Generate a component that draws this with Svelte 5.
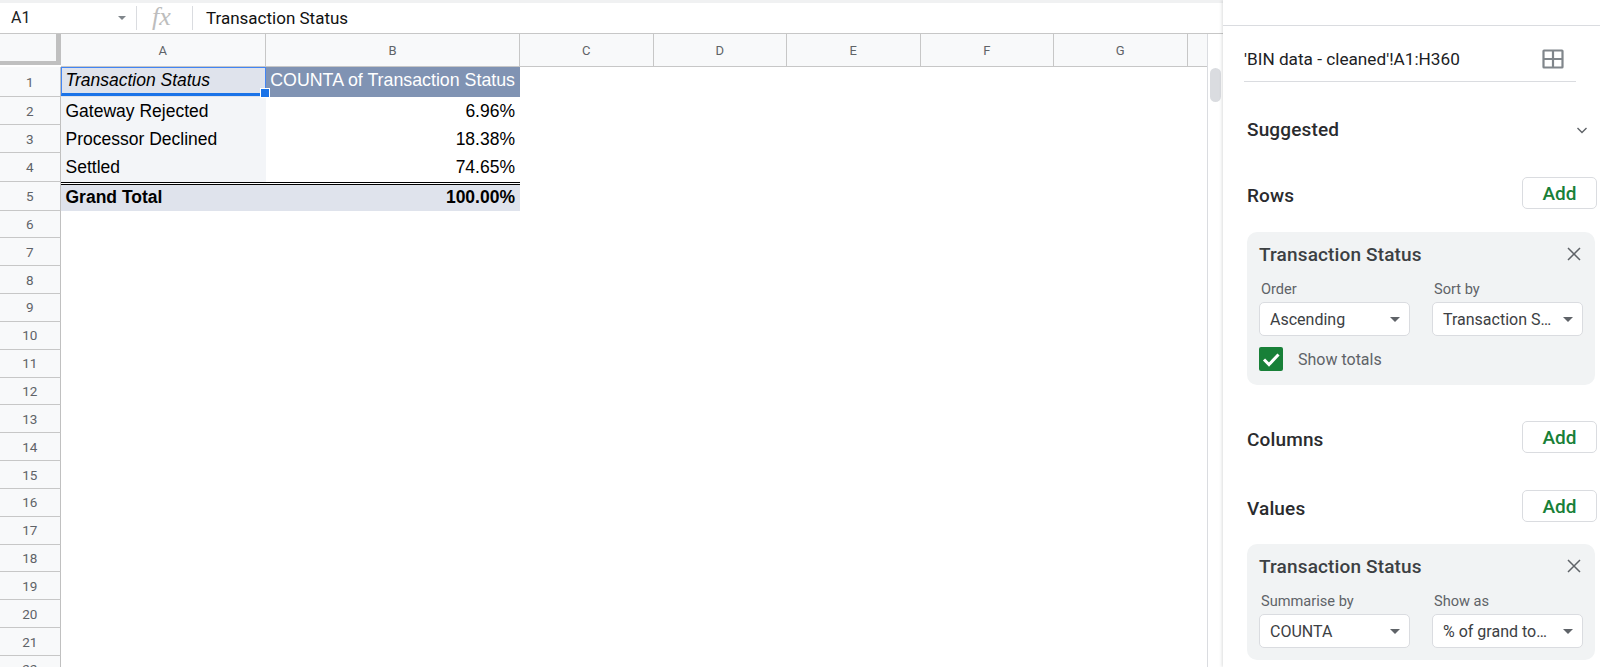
<script lang="ts">
  const columns = [
    { label: 'A', width: 205.5 },
    { label: 'B', width: 254 },
    { label: 'C', width: 133.5 },
    { label: 'D', width: 133.5 },
    { label: 'E', width: 133.5 },
    { label: 'F', width: 133.5 },
    { label: 'G', width: 133.5 },
    { label: '', width: 20 },
  ];

  const topRows = [30, 28, 28, 28.5, 29];
  const rowNumbers = Array.from({ length: 22 }, (_, i) => i + 1);
  const rowHeight = (n: number) => (n <= 5 ? topRows[n - 1] : 27.85);

  const pivot = [
    { a: 'Gateway Rejected', b: '6.96%', row: 2 },
    { a: 'Processor Declined', b: '18.38%', row: 3 },
    { a: 'Settled', b: '74.65%', row: 4 },
  ];

  const gridCols = `60.5px ${columns.map((c) => c.width + 'px').join(' ')}`;
  const gridRows = `33px ${rowNumbers.map((n) => rowHeight(n) + 'px').join(' ')}`;
</script>

<div class="app">
  <div class="sheet">
    <div class="formula-bar">
      <div class="name-box">
        <span>A1</span>
        <i class="caret small"></i>
      </div>
      <span class="fx">fx</span>
      <span class="formula-text">Transaction Status</span>
    </div>

    <div class="sheet-body">
      <div class="grid" style="grid-template-columns: {gridCols}; grid-template-rows: {gridRows}">
        <div class="corner"></div>
        {#each columns as col}
          <div class="col-head">{col.label}</div>
        {/each}

        {#each rowNumbers as n}
          <div class="row-head" style="grid-row: {n + 1}">{n}</div>
        {/each}

        <div class="cell selected-cell" style="grid-row: 2; grid-column: 2">
          <em>Transaction Status</em>
          <span class="selection"></span>
          <span class="fill-handle"></span>
        </div>
        <div class="cell head-cell" style="grid-row: 2; grid-column: 3">COUNTA of Transaction Status</div>

        {#each pivot as item}
          <div class="cell label-cell" style="grid-row: {item.row + 1}; grid-column: 2">{item.a}</div>
          <div class="cell value-cell" style="grid-row: {item.row + 1}; grid-column: 3">{item.b}</div>
        {/each}

        <div class="cell total-cell" style="grid-row: 6; grid-column: 2">Grand Total</div>
        <div class="cell total-cell value-cell" style="grid-row: 6; grid-column: 3">100.00%</div>
      </div>

      <div class="scroll-track">
        <div class="scroll-thumb"></div>
      </div>
    </div>
  </div>

  <aside class="panel">
    <div class="panel-top"></div>

    <div class="range">
      <span>'BIN data - cleaned'!A1:H360</span>
      <svg width="22" height="20" viewBox="0 0 22 20" fill="none" stroke="#80868b" stroke-width="2.2">
        <rect x="1.5" y="1.5" width="19" height="17" rx="0.5" />
        <path d="M11 1.5v17M1.5 10h19" />
      </svg>
    </div>

    <div class="section suggested">
      <h3>Suggested</h3>
      <svg class="chevron" width="14" height="14" viewBox="0 0 14 14" fill="none" stroke="#5f6368" stroke-width="1.4">
        <path d="M2.5 5l4.5 4.5L11.5 5" />
      </svg>
    </div>

    <div class="section rows-head">
      <h3>Rows</h3>
      <button class="add">Add</button>
    </div>

    <div class="card card-rows">
      <div class="card-title">
        <span>Transaction Status</span>
        <svg width="14" height="14" viewBox="0 0 14 14" fill="none" stroke="#5f6368" stroke-width="1.5">
          <path d="M1 1l12 12M13 1L1 13" />
        </svg>
      </div>
      <div class="fields">
        <div class="field">
          <span class="field-label">Order</span>
          <div class="select"><span>Ascending</span><i class="caret"></i></div>
        </div>
        <div class="field">
          <span class="field-label">Sort by</span>
          <div class="select"><span>Transaction S…</span><i class="caret"></i></div>
        </div>
      </div>
      <div class="totals">
        <span class="checkbox">
          <svg width="24" height="24" viewBox="0 0 24 24" fill="none" stroke="#fff" stroke-width="3">
            <path d="M5 12.5l5 5L19.5 7.5" />
          </svg>
        </span>
        <span>Show totals</span>
      </div>
    </div>

    <div class="section columns-head">
      <h3>Columns</h3>
      <button class="add">Add</button>
    </div>

    <div class="section values-head">
      <h3>Values</h3>
      <button class="add">Add</button>
    </div>

    <div class="card card-values">
      <div class="card-title">
        <span>Transaction Status</span>
        <svg width="14" height="14" viewBox="0 0 14 14" fill="none" stroke="#5f6368" stroke-width="1.5">
          <path d="M1 1l12 12M13 1L1 13" />
        </svg>
      </div>
      <div class="fields">
        <div class="field">
          <span class="field-label">Summarise by</span>
          <div class="select"><span>COUNTA</span><i class="caret"></i></div>
        </div>
        <div class="field">
          <span class="field-label">Show as</span>
          <div class="select"><span>% of grand to…</span><i class="caret"></i></div>
        </div>
      </div>
    </div>
  </aside>
</div>

<style>
  :global(body) {
    margin: 0;
    background: #fff;
  }

  .app {
    display: flex;
    width: 1600px;
    height: 667px;
    overflow: hidden;
    font-family: Roboto, "Liberation Sans", sans-serif;
    color: #202124;
  }

  .sheet {
    width: 1223px;
    flex: none;
    display: flex;
    flex-direction: column;
    border-top: 3px solid #f0f1f2;
    box-sizing: border-box;
  }

  .formula-bar {
    height: 31px;
    flex: none;
    display: flex;
    align-items: center;
    border-bottom: 1px solid #c7c7c7;
    margin-top: -1px;
  }

  .name-box {
    width: 115px;
    padding: 0 10px 0 11px;
    height: 24px;
    flex: none;
    display: flex;
    align-items: center;
    justify-content: space-between;
    font-size: 16px;
    border-right: 1px solid #dadce0;
  }

  .fx {
    width: 56px;
    height: 24px;
    flex: none;
    box-sizing: border-box;
    border-right: 1px solid #dadce0;
    font: italic 26px/22px "Liberation Serif", serif;
    color: #bdbdbd;
    padding-left: 15px;
  }

  .formula-text {
    margin-left: 13px;
    font-size: 17px;
    color: #111;
  }

  .sheet-body {
    flex: 1;
    display: flex;
    min-height: 0;
  }

  .grid {
    width: 1207px;
    flex: none;
    display: grid;
    overflow: hidden;
    align-content: start;
  }

  .corner {
    background: #f8f9fa;
    border-right: 5px solid #c0c0c0;
    border-bottom: 4px solid #c0c0c0;
    box-sizing: border-box;
    height: 30.5px;
  }

  .col-head {
    background: #f8f9fa;
    border-right: 1px solid #c7c7c7;
    border-bottom: 1px solid #c7c7c7;
    box-sizing: border-box;
    display: flex;
    align-items: center;
    justify-content: center;
    font-size: 13px;
    color: #5f6368;
  }

  .row-head {
    grid-column: 1;
    background: #f8f9fa;
    border-right: 1px solid #c0c0c0;
    border-bottom: 1px solid #c7c7c7;
    box-sizing: border-box;
    display: flex;
    align-items: center;
    justify-content: center;
    font-size: 13.5px;
    color: #5f6368;
  }

  .cell {
    display: flex;
    align-items: center;
    padding: 0 5px;
    box-sizing: border-box;
    font-family: "Liberation Sans", Arial, sans-serif;
    font-size: 17.5px;
    color: #000;
    white-space: nowrap;
    min-width: 0;
  }

  .selected-cell {
    position: relative;
    background: #dfe3ec;
    padding: 0 4px 4px 4px;
  }

  .selected-cell em {
    padding-left: 1px;
  }

  .selection {
    position: absolute;
    inset: 0 0 1px 0;
    border: 1.5px solid #4285f4;
    border-bottom: 3px solid #1a73e8;
    box-sizing: border-box;
  }

  .fill-handle {
    position: absolute;
    right: -4px;
    bottom: -1px;
    width: 8px;
    height: 8px;
    background: #1a73e8;
    border: 1px solid #fff;
  }

  .head-cell {
    background: #8093b3;
    color: #fff;
    justify-content: flex-end;
    padding-bottom: 4px;
    padding-left: 0;
    font-size: 17.8px;
  }

  .label-cell {
    background: #f3f5f8;
  }

  .value-cell {
    justify-content: flex-end;
  }

  .total-cell {
    background: #dfe3ec;
    background-clip: padding-box;
    font-weight: 700;
    border-top: 3px double #000;
  }

  .scroll-track {
    flex: 1;
    border-left: 1px solid #dadce0;
    padding: 34px 2px 0;
    box-sizing: border-box;
  }

  .scroll-thumb {
    width: 11px;
    height: 34px;
    border-radius: 6px;
    background: #dadce0;
  }

  .caret {
    width: 0;
    height: 0;
    border-left: 5px solid transparent;
    border-right: 5px solid transparent;
    border-top: 5px solid #5f6368;
    flex: none;
  }

  .caret.small {
    border-width: 4px 4px 0;
    border-top-color: #80868b;
  }

  .panel {
    flex: 1;
    min-width: 0;
    position: relative;
    box-shadow: -1px 0 3px rgba(60, 64, 67, 0.18);
    display: flex;
    flex-direction: column;
    padding: 0 3px 0 24px;
    box-sizing: border-box;
  }

  .panel-top {
    height: 25px;
    margin: 0 -3px 0 -24px;
    border-bottom: 1px solid #dadce0;
    flex: none;
  }

  .range {
    height: 56px;
    width: 332px;
    margin-left: -3px;
    flex: none;
    box-sizing: border-box;
    border-bottom: 1px solid #dadce0;
    display: flex;
    align-items: center;
    justify-content: space-between;
    padding: 11px 12px 0 0;
    font-size: 17.2px;
    color: #202124;
  }

  .section {
    display: flex;
    align-items: center;
    justify-content: space-between;
    height: 33px;
    flex: none;
  }

  .section h3 {
    margin: 0;
    font-size: 19px;
    font-weight: 500;
    letter-spacing: 0.15px;
    color: #2a2b2e;
  }

  .suggested {
    margin-top: 31px;
    padding-right: 8px;
  }

  .rows-head {
    margin-top: 33px;
  }

  .columns-head {
    margin-top: 38px;
  }

  .values-head {
    margin-top: 36px;
  }

  .add {
    width: 75px;
    height: 32px;
    margin-bottom: 5px;
    border: 1px solid #dadce0;
    border-radius: 5px;
    background: #fff;
    color: #188038;
    font: 500 19px Roboto, sans-serif;
    padding: 0;
  }

  .card {
    width: 348px;
    background: #f1f3f4;
    border-radius: 10px;
    padding: 12px 12px 0;
    box-sizing: border-box;
    flex: none;
  }

  .card-rows {
    height: 153px;
    margin-top: 20px;
  }

  .card-values {
    height: 116px;
    margin-top: 19px;
  }

  .card-title {
    display: flex;
    align-items: center;
    justify-content: space-between;
    height: 20px;
    padding-right: 2px;
    font-size: 19px;
    font-weight: 500;
    letter-spacing: 0.15px;
    color: #3c4043;
  }

  .fields {
    display: flex;
    gap: 22px;
    margin-top: 17px;
  }

  .field {
    width: 151px;
    display: flex;
    flex-direction: column;
    gap: 5px;
  }

  .field-label {
    font-size: 14.6px;
    line-height: 16px;
    padding-left: 2px;
    color: #5f6368;
  }

  .select {
    height: 34px;
    background: #fff;
    border: 1px solid #dadce0;
    border-radius: 5px;
    display: flex;
    align-items: center;
    justify-content: space-between;
    padding: 0 9px 0 10px;
    box-sizing: border-box;
    font-size: 16px;
    color: #3c4043;
    white-space: nowrap;
  }

  .totals {
    display: flex;
    align-items: center;
    gap: 15px;
    margin-top: 11px;
    font-size: 16px;
    color: #5f6368;
  }

  .checkbox {
    width: 24px;
    height: 24px;
    background: #188038;
    border-radius: 2px;
    display: block;
  }
</style>
